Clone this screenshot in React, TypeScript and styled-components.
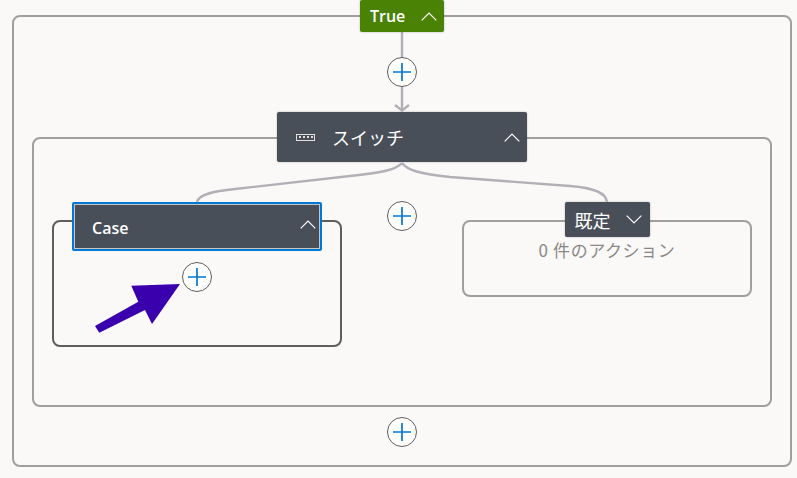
import React from 'react';
import styled, { createGlobalStyle } from 'styled-components';

const GlobalStyle = createGlobalStyle`
  html, body {
    margin: 0;
    padding: 0;
    background: #faf9f8;
  }
  body {
    font-family: "Open Sans", "Noto Sans CJK JP", sans-serif;
    overflow: hidden;
  }
`;

const Canvas = styled.div`
  position: relative;
  width: 797px;
  height: 478px;
  padding: 15px 0 0 12px;
  box-sizing: border-box;
  background: #faf9f8;
  overflow: hidden;
`;

// connectors and the annotation arrow sit over the nodes
const Overlay = styled.svg`
  position: absolute;
  top: 0;
  left: 0;
  z-index: 0;
  pointer-events: none;
`;

const ArrowLayer = styled(Overlay)`
  z-index: 5;
`;

const Scope = styled.div<{ $w: number; $h: number; $dark?: boolean }>`
  display: flex;
  flex-direction: column;
  align-items: center;
  flex: none;
  width: ${p => p.$w}px;
  height: ${p => p.$h}px;
  box-sizing: border-box;
  border: 2px solid ${p => (p.$dark ? '#605e5c' : '#a19f9d')};
  border-radius: 8px;
`;

const SwitchScope = styled(Scope)`
  margin-top: -25px;
`;

const Branches = styled.div`
  display: flex;
  justify-content: space-between;
  align-items: flex-start;
  width: 100%;
  box-sizing: border-box;
  padding: 81px 18px 0;
`;

const Card = styled.div<{ $w: number; $h: number; $active?: boolean }>`
  position: relative;
  z-index: 1;
  display: flex;
  align-items: center;
  flex: none;
  width: ${p => p.$w}px;
  height: ${p => p.$h}px;
  box-sizing: border-box;
  background: #484f58;
  color: #fff;
  border-radius: 2px;
  border: ${p => (p.$active ? '2px solid #0078d4' : 'none')};
  box-shadow: ${p =>
    p.$active ? 'inset 0 0 0 1px #c8c6c4' : '0 0 2px rgba(0, 0, 0, 0.3)'};
`;

const TrueTag = styled(Card)`
  margin-top: -17px;
  background: #498205;
  padding: 0 7px 0 10px;
  justify-content: space-between;
`;

const SwitchCard = styled(Card)`
  margin-top: 25px;
  padding: 0 7px 0 19px;
`;

const CaseCard = styled(Card)`
  margin-top: -20px;
  padding: 2px 4px 0 18px;
  justify-content: space-between;
`;

const CaseChevron = styled.span`
  display: flex;
  margin-top: -6px;
`;

const DefaultCard = styled(Card)`
  margin-top: -20px;
  padding: 0 8px 0 10px;
  justify-content: space-between;
`;

const BoldLabel = styled.span`
  font-size: 16px;
  font-weight: 600;
`;

const SwitchLabel = styled.span`
  flex: 1;
  margin-left: 17px;
  font-size: 18px;
  font-family: "Noto Sans CJK JP", sans-serif;
`;

const DefaultLabel = styled.span`
  font-size: 18px;
  font-family: "Noto Sans CJK JP", sans-serif;
`;

const EmptyNote = styled.div`
  margin-top: 1px;
  font-size: 17px;
  line-height: 24px;
  letter-spacing: 0.6px;
  color: #8a8886;
  font-family: "Noto Sans CJK JP", sans-serif;
  white-space: nowrap;
`;

const AddCircle = styled.div<{ $top: number }>`
  position: relative;
  z-index: 1;
  display: flex;
  align-items: center;
  justify-content: center;
  flex: none;
  width: 30px;
  height: 30px;
  margin-top: ${p => p.$top}px;
  box-sizing: border-box;
  background: #fff;
  border: 1px solid #605e5c;
  border-radius: 50%;
`;

const AddButton = ({ top }: { top: number }) => (
  <AddCircle $top={top}>
    <svg width="20" height="20" viewBox="0 0 20 20">
      <path d="M10 1v18M1 10h18" stroke="#0078d4" strokeWidth="1.7" fill="none" />
    </svg>
  </AddCircle>
);

const Chevron = ({ up }: { up?: boolean }) => (
  <svg width="16" height="9" viewBox="0 0 16 9">
    <path
      d={up ? 'M0.7 8.3L8 1l7.3 7.3' : 'M0.7 0.7L8 8l7.3-7.3'}
      stroke="#fff"
      strokeWidth="1.2"
      fill="none"
    />
  </svg>
);

const SwitchIcon = () => (
  <svg width="19" height="7" viewBox="0 0 19 7">
    <rect x="0.5" y="0.5" width="18" height="6" fill="none" stroke="#e1dfdd" />
    <path d="M3 3h2M7 3h2M11 3h2M15 3h2" stroke="#e1dfdd" strokeWidth="2" />
  </svg>
);

const App = () => (
  <Canvas>
    <GlobalStyle />
    <Overlay width="797" height="478" viewBox="0 0 797 478">
      <g fill="none" stroke="#b1b0b6" strokeWidth="2.4">
        <path d="M402 32V110" />
        <path d="M395 105l7 5.5 7-5.5" />
      </g>
    </Overlay>
    <Scope $w={780} $h={452}>
      <TrueTag $w={84} $h={32}>
        <BoldLabel>True</BoldLabel>
        <Chevron up />
      </TrueTag>
      <AddButton top={25} />
      <SwitchCard $w={250} $h={50}>
        <SwitchIcon />
        <SwitchLabel>スイッチ</SwitchLabel>
        <Chevron up />
      </SwitchCard>
      <SwitchScope $w={740} $h={270}>
        <Branches>
          <Scope $w={290} $h={127} $dark>
            <CaseCard $w={250} $h={49} $active>
              <BoldLabel>Case</BoldLabel>
              <CaseChevron>
                <Chevron up />
              </CaseChevron>
            </CaseCard>
            <AddButton top={11} />
          </Scope>
          <AddButton top={-19} />
          <Scope $w={290} $h={77}>
            <DefaultCard $w={85} $h={35}>
              <DefaultLabel>既定</DefaultLabel>
              <Chevron />
            </DefaultCard>
            <EmptyNote>0 件のアクション</EmptyNote>
          </Scope>
        </Branches>
      </SwitchScope>
      <AddButton top={10} />
    </Scope>
    <ArrowLayer width="797" height="478" viewBox="0 0 797 478">
      <g fill="none" stroke="#b1b0b6" strokeWidth="2.4">
        <path d="M402 163C396 170 380 173 350 176L235 189C215 191 199 194 197 202" />
        <path d="M402 163C407 170 420 174 450 177L570 186C595 188 606 193 607 202" />
      </g>
      <path
        d="M95 326L138.3 301.7L131.3 285.7L180 284L152 324L145 310L99.3 332.7Z"
        fill="#3a00ae"
      />
    </ArrowLayer>
  </Canvas>
);

export default App;
